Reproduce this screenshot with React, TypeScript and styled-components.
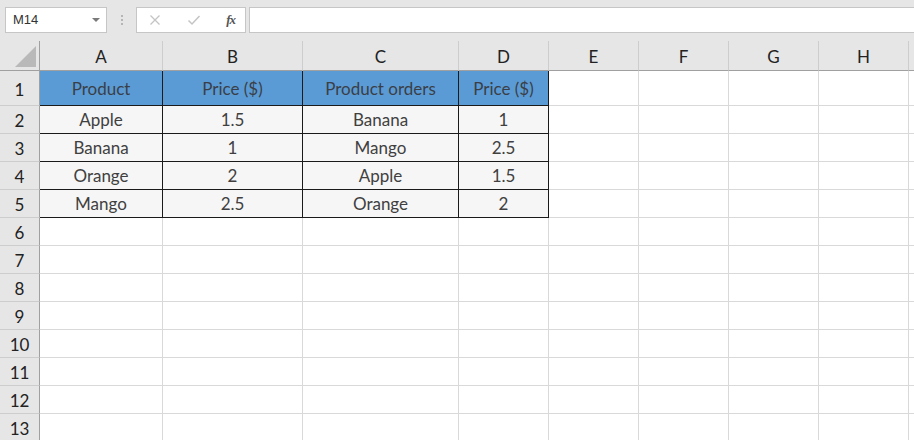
import React from "react";
import styled, { createGlobalStyle } from "styled-components";

const GlobalStyle = createGlobalStyle`
  html, body {
    margin: 0;
    padding: 0;
    background: #ffffff;
    overflow: hidden;
  }
  body {
    font-family: Lato, "Open Sans", sans-serif;
  }
`;

type CellKind = "corner" | "colHead" | "rowHead" | "head" | "data" | "blank";

const COLUMNS = [40, 123, 140, 156, 90, 90, 90, 90, 90, 90];
const LETTERS = ["A", "B", "C", "D", "E", "F", "G", "H", ""];
const ROW_COUNT = 13;

const TABLE_HEAD = ["Product", "Price ($)", "Product orders", "Price ($)"];
const TABLE_ROWS = [
  ["Apple", "1.5", "Banana", "1"],
  ["Banana", "1", "Mango", "2.5"],
  ["Orange", "2", "Apple", "1.5"],
  ["Mango", "2.5", "Orange", "2"],
];

const Page = styled.div`
  width: 914px;
  height: 440px;
  overflow: hidden;
  background: #ffffff;
`;

const Toolbar = styled.div`
  display: flex;
  align-items: center;
  height: 41px;
  padding: 0 0 2px 5px;
  box-sizing: border-box;
  background: #e6e6e6;
`;

const NameBox = styled.div`
  display: flex;
  align-items: center;
  justify-content: space-between;
  width: 102px;
  height: 26px;
  box-sizing: border-box;
  padding: 0 6px 0 7px;
  background: #ffffff;
  border: 1px solid #c6c6c6;
  font-family: "Liberation Sans", Arial, sans-serif;
  font-size: 13px;
  color: #333333;
`;

const DropArrow = styled.span`
  width: 0;
  height: 0;
  border-left: 4px solid transparent;
  border-right: 4px solid transparent;
  border-top: 4px solid #7a7a7a;
  margin-top: 1px;
`;

const Grip = styled.div`
  display: flex;
  flex-direction: column;
  gap: 2px;
  margin: 0 13px 0 14px;
  span {
    width: 2px;
    height: 2px;
    background: #b5b5b5;
  }
`;

const FormulaButtons = styled.div`
  display: flex;
  align-items: center;
  justify-content: space-between;
  width: 110px;
  height: 26px;
  box-sizing: border-box;
  padding: 0 10px 0 12px;
  background: #ffffff;
  border: 1px solid #c6c6c6;
`;

const Fx = styled.span`
  font-family: "Liberation Serif", "Times New Roman", serif;
  font-style: italic;
  font-weight: bold;
  font-size: 13px;
  color: #555555;
  letter-spacing: -1px;
`;

const FormulaInput = styled.div`
  flex: 1;
  height: 26px;
  margin-left: 3px;
  box-sizing: border-box;
  background: #ffffff;
  border: 1px solid #c6c6c6;
  border-right: none;
`;

const Sheet = styled.div`
  display: grid;
  grid-template-columns: ${COLUMNS.map((w) => `${w}px`).join(" ")};
  grid-template-rows: 30px 35px repeat(${ROW_COUNT - 1}, 28px);
`;

const Cell = styled.div<{ $kind: CellKind }>`
  box-sizing: border-box;
  display: flex;
  align-items: center;
  justify-content: center;
  position: relative;
  overflow: hidden;
  white-space: nowrap;
  font-size: 17px;
  color: #404040;
  background: ${(p) =>
    p.$kind === "head"
      ? "#5b9bd5"
      : p.$kind === "data"
      ? "#f6f6f6"
      : p.$kind === "blank"
      ? "#ffffff"
      : "#e6e6e6"};
  border-right: 1px solid
    ${(p) =>
      p.$kind === "head" || p.$kind === "data"
        ? "#1a1a1a"
        : p.$kind === "rowHead" || p.$kind === "corner"
        ? "#a0a0a0"
        : p.$kind === "colHead"
        ? "#cdcdcd"
        : "#d9d9d9"};
  border-bottom: 1px solid
    ${(p) =>
      p.$kind === "head" || p.$kind === "data"
        ? "#1a1a1a"
        : p.$kind === "colHead" || p.$kind === "corner"
        ? "#a0a0a0"
        : p.$kind === "rowHead"
        ? "#cdcdcd"
        : "#d9d9d9"};
  ${(p) =>
    p.$kind === "colHead" || p.$kind === "rowHead"
      ? "font-size: 17px; color: #222; padding-top: 2px;"
      : ""}
  ${(p) => (p.$kind === "head" ? "color: #3a3f47;" : "")}
`;

const CornerMark = styled.div`
  position: absolute;
  right: 3px;
  bottom: 3px;
  width: 0;
  height: 0;
  border-left: 21px solid transparent;
  border-bottom: 21px solid #b9b9b9;
`;

const Cross = () => (
  <svg width="12" height="12" viewBox="0 0 12 12">
    <path d="M1.5 1.5 L10.5 10.5 M10.5 1.5 L1.5 10.5" stroke="#c4c4c4" strokeWidth="1.3" fill="none" />
  </svg>
);

const Check = () => (
  <svg width="14" height="12" viewBox="0 0 14 12">
    <path d="M1.5 6.5 L5 10 L12.5 2" stroke="#c4c4c4" strokeWidth="1.5" fill="none" />
  </svg>
);

function cellKind(row: number, col: number): CellKind {
  if (row === 0 && col === 0) return "corner";
  if (row === 0) return "colHead";
  if (col === 0) return "rowHead";
  if (col <= 4 && row === 1) return "head";
  if (col <= 4 && row <= 5) return "data";
  return "blank";
}

function cellText(row: number, col: number): string {
  if (row === 0 && col > 0) return LETTERS[col - 1];
  if (col === 0 && row > 0) return String(row);
  if (col <= 4 && row === 1) return TABLE_HEAD[col - 1];
  if (col <= 4 && row >= 2 && row <= 5) return TABLE_ROWS[row - 2][col - 1];
  return "";
}

export default function App() {
  const cells: React.ReactNode[] = [];
  for (let r = 0; r <= ROW_COUNT; r++) {
    for (let c = 0; c < COLUMNS.length; c++) {
      const kind = cellKind(r, c);
      cells.push(
        <Cell key={`${r}-${c}`} $kind={kind}>
          {kind === "corner" ? <CornerMark /> : cellText(r, c)}
        </Cell>
      );
    }
  }

  return (
    <Page>
      <GlobalStyle />
      <Toolbar>
        <NameBox>
          M14
          <DropArrow />
        </NameBox>
        <Grip>
          <span />
          <span />
          <span />
        </Grip>
        <FormulaButtons>
          <Cross />
          <Check />
          <Fx>fx</Fx>
        </FormulaButtons>
        <FormulaInput />
      </Toolbar>
      <Sheet>{cells}</Sheet>
    </Page>
  );
}
